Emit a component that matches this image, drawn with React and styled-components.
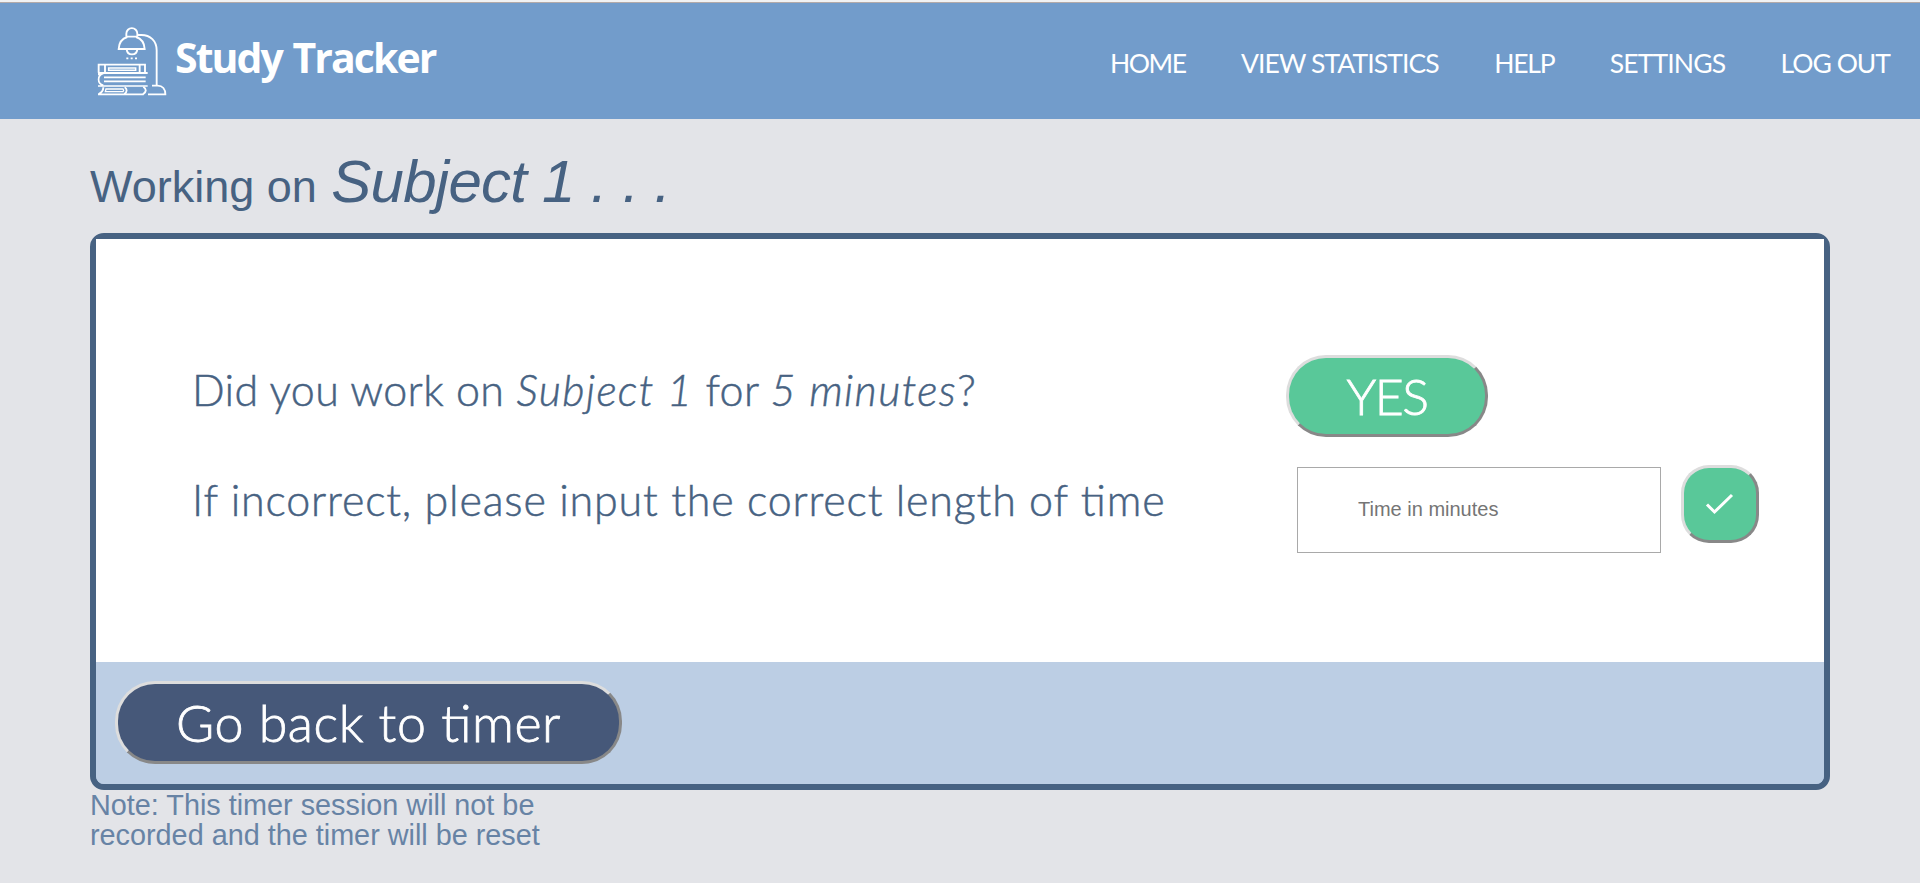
import React from "react";
import styled, { createGlobalStyle } from "styled-components";

const GlobalStyle = createGlobalStyle`
  *, *::before, *::after { box-sizing: border-box; }
  body {
    margin: 0;
    background: #e3e4e8;
    font-family: "Liberation Sans", Arial, sans-serif;
    color: #476282;
  }
`;

const lightFace = `"Lato", "Open Sans", sans-serif`;

const TopStrip = styled.div`
  height: 3px;
  background: #f1f2f3;
  border-bottom: 1px solid #b3aaa9;
`;

const Header = styled.header`
  display: flex;
  justify-content: space-between;
  height: 116px;
  padding: 0 30px 0 90px;
  background: #729ccb;
  color: #fff;
`;

const Brand = styled.a`
  display: flex;
  align-items: flex-start;
  padding-top: 17px;
`;

const BrandName = styled.span`
  margin-top: 9px;
  font: 700 41px/56px "Open Sans", "Noto Sans", sans-serif;
  letter-spacing: -1.95px;
  word-spacing: 2px;
  white-space: nowrap;
`;

const Nav = styled.nav`
  display: flex;
  align-items: center;
  gap: 55.3px;
  padding-top: 4px;
`;

const NavLink = styled.a`
  font: 400 26.5px/32px ${lightFace};
  letter-spacing: ${(p) => p.$track}px;
  white-space: nowrap;
`;

const Main = styled.main`
  padding: 0 90px;
`;

const Heading = styled.h1`
  height: 114px;
  margin: 0;
  font-size: 45px;
  font-weight: 400;
  line-height: 126px;
  white-space: nowrap;
`;

const HeadingSubject = styled.em`
  margin-left: 2px;
  font-size: 60px;
  letter-spacing: -0.75px;
`;

const Card = styled.section`
  height: 557px;
  border: 6px solid #476282;
  border-radius: 14px;
  background: linear-gradient(#fff 0 423px, #bccee4 423px);
`;

const Questions = styled.div`
  display: grid;
  grid-template-rows: 82px 88px;
  row-gap: 28px;
  height: 423px;
  padding: 116px 65px 0 96px;
  background: #fff;
`;

const QuestionRow = styled.div`
  display: grid;
  grid-template-columns: 1094px 1fr;
  align-items: start;
`;

const Question = styled.p`
  margin: 0;
  font: 300 43px/69px ${lightFace};
  font-feature-settings: "liga" 1;
  letter-spacing: ${(p) => p.$track}px;
  -webkit-text-stroke: 0.5px currentColor;
  white-space: nowrap;
  em { letter-spacing: 1.4px; }
`;

const PillButton = styled.button`
  width: ${(p) => p.$width}px;
  height: ${(p) => p.$height}px;
  padding: 0 0 1px;
  border: 3px solid;
  border-color: #dddddd #888888 #888888 #dddddd;
  border-radius: ${(p) => p.$radius || 40}px;
  background: ${(p) => p.$fill};
  color: #fff;
  font: 300 ${(p) => p.$size || 50}px/60px ${lightFace};
  font-feature-settings: "liga" 1;
  letter-spacing: ${(p) => p.$track || 0}px;
  -webkit-text-stroke: 0.8px currentColor;
  white-space: nowrap;
`;

const TimeForm = styled.div`
  display: flex;
  align-items: flex-start;
  gap: 20px;
  padding-left: 11px;
`;

const TimeInput = styled.input`
  width: 364px;
  height: 86px;
  margin-top: 2px;
  padding: 0 60px 2px;
  border: 1px solid #a9a9a9;
  background: #fff;
  font: 20px "Liberation Sans", Arial, sans-serif;
  &::placeholder { color: #757575; opacity: 1; }
`;

const CheckMark = styled.svg`
  display: block;
  margin: 0 auto;
`;

const CardFooter = styled.div`
  height: 122px;
  padding: 19px;
  border-radius: 0 0 8px 8px;
  background: #bccee4;
`;

const Note = styled.p`
  width: 470px;
  margin: 0;
  color: #6783a5;
  font-size: 28.8px;
  line-height: 30px;
`;

function LampAndBooks() {
  return (
    <svg width="85" height="80" viewBox="0 0 255 240" fill="none" stroke="#fff" strokeWidth="5.6">
      <path d="M109 50V41a16.500 16.500 0 0 1 33 0v9M109 50h33" />
      <path d="M112 51C96 56 87 67 86 87h78c-1-20-10-31-26-36" />
      <path d="M110 88c2 20 30 20 32 0" />
      <path d="M109 115h6M122 115h6M135 115h6" strokeWidth="5" />
      <path d="M143 45h11c27 0 46 18 46 46v104" />
      <path d="M186 197h17c15 0 23 11 23 26h-52" />
      <path d="M26 158v-24h139v25M45 134v24M149 134v24M24 159h149" />
      <path d="M56 144h81v7H56z" strokeWidth="4.500" />
      <path d="M24 163h8M40 160c-19 6-19 31 0 36M42 172h125M42 184h125M24 198h149" strokeWidth="5" />
      <path d="M24 223h137M40 202c0 10-5 16-14 20M104 202c8 5 8 14-1 20M160 200c10 7 10 15-1 23" />
      <path d="M48 207h51q4 4 0 8H46z" strokeWidth="4" />
    </svg>
  );
}

export default function App() {
  return (
    <>
      <GlobalStyle />
      <TopStrip />
      <Header>
        <Brand>
          <LampAndBooks />
          <BrandName>Study Tracker</BrandName>
        </Brand>
        <Nav>
          <NavLink $track={-1.4}>HOME</NavLink>
          <NavLink $track={-0.9}>VIEW STATISTICS</NavLink>
          <NavLink $track={-1.2}>HELP</NavLink>
          <NavLink $track={-0.85}>SETTINGS</NavLink>
          <NavLink $track={-1}>LOG OUT</NavLink>
        </Nav>
      </Header>
      <Main>
        <Heading>
          Working on <HeadingSubject>Subject 1 . . .</HeadingSubject>
        </Heading>
        <Card>
          <Questions>
            <QuestionRow>
              <Question $track={0.35}>
                Did you work on <em>Subject 1</em> for <em>5 minutes</em>?
              </Question>
              <PillButton $width={202} $height={82} $track={-1.5} $fill="#59c899">YES</PillButton>
            </QuestionRow>
            <QuestionRow>
              <Question $track={0.83}>If incorrect, please input the correct length of time</Question>
              <TimeForm>
                <TimeInput placeholder="Time in minutes" />
                <PillButton $width={78} $height={78} $radius={28} $fill="#59c899" aria-label="Confirm time">
                  <CheckMark width="30" height="24" viewBox="0 0 30 24" fill="none" stroke="#fff" strokeWidth="3">
                    <path d="M2 12.500l7.500 7.500L27 3" />
                  </CheckMark>
                </PillButton>
              </TimeForm>
            </QuestionRow>
          </Questions>
          <CardFooter>
            <PillButton $width={507} $height={83} $size={52} $track={0.55} $fill="#465879">Go back to timer</PillButton>
          </CardFooter>
        </Card>
        <Note>Note: This timer session will not be recorded and the timer will be reset</Note>
      </Main>
    </>
  );
}
